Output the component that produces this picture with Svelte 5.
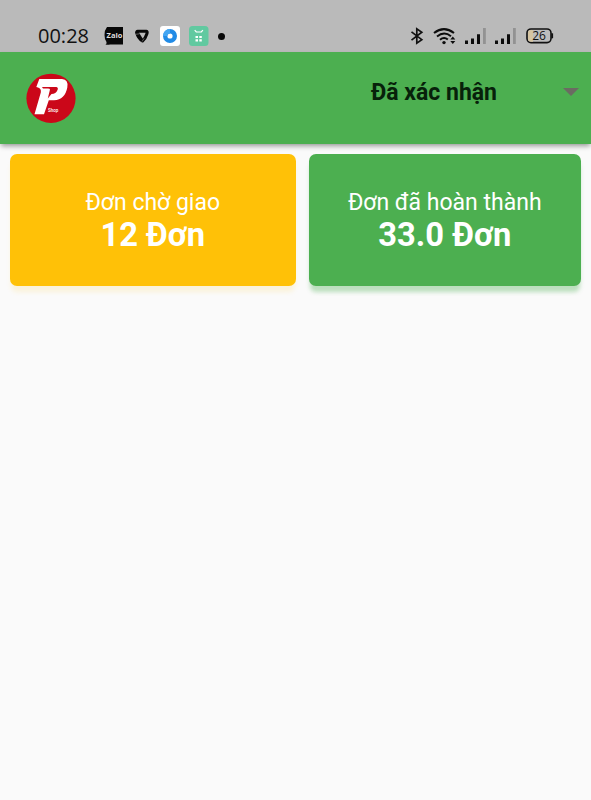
<script>
  const cards = [
    { label: "Đơn chờ giao", value: "12 Đơn", kind: "waiting" },
    { label: "Đơn đã hoàn thành", value: "33.0 Đơn", kind: "done" },
  ];
  let status = "Đã xác nhận";
</script>

<div class="statusBar">
  <span class="clock">00:28</span>
  <div class="notifications">
    <svg width="20" height="20" viewBox="0 0 20 20">
      <path d="M3 1H19V18.500H6Q4 19 1.500 18.500Q3 17.500 2.500 16Q.5 13.500.5 9Q.5 4 3 1Z" fill="#080808" />
      <text x="10.500" y="12" class="zalo">Zalo</text>
    </svg>
    <svg class="shield" width="16" height="20" viewBox="0 0 16 20">
      <path d="M3.800 5.300H12.400Q13.600 5.400 13 7.500Q11.500 12.500 8.500 15Q4 12 2.700 6.800Q2.500 5.400 3.800 5.300Z" fill="none" stroke="#080808" stroke-width="3" stroke-linejoin="round" />
      <path d="M2.500 5.500L7.800 14" stroke="#080808" stroke-width="3" />
      <path d="M1.500 8.300L5.500 7.800M8 15.500L10.200 12.300" stroke="#858585" stroke-width=".7" />
    </svg>
    <svg class="browser" width="20" height="20" viewBox="0 0 20 20">
      <rect width="20" height="20" rx="3" fill="#fff" />
      <circle cx="10" cy="10" r="4.800" fill="#fff" stroke="#218be6" stroke-width="4.400" />
      <path d="M5.200 10A4.800 4.800 0 0 1 10 5.200" fill="none" stroke="#43a6f3" stroke-width="4.400" />
    </svg>
    <svg class="robot" width="20" height="20" viewBox="0 0 20 20">
      <rect width="19.500" height="20" rx="3.500" fill="#61c9a0" />
      <path d="M5.700 4.200L7.300 6H12.300L13.900 4.200" fill="none" stroke="#fff" stroke-width="1.200" />
      <path d="M6.500 10h2.500v2h-2.500zM10.300 10h2.500v2h-2.500zM6.500 13.300h2.500v2.200h-2.500zM10.300 13.300h2.500v2.200h-2.500z" fill="#fff" />
    </svg>
    <i class="dot"></i>
  </div>
  <div class="system">
    <svg width="14" height="18" viewBox="0 0 14 18">
      <path d="M1.500 4.800L11.800 12.700L6.800 16.200V1.800L11.800 5.200L1.500 13.200" fill="none" stroke="#111" stroke-width="1.700" />
    </svg>
    <svg class="wifi" width="24" height="18" viewBox="0 0 24 18">
      <g fill="none" stroke="#0c0c0c" stroke-width="2">
        <path d="M1 6Q11 -1.800 21 6" />
        <path d="M4 9.500Q11 3.800 18 9.200" />
        <path d="M7 12.800Q11 9.500 14.800 12.500" />
      </g>
      <circle cx="11" cy="15.600" r="1.700" fill="#0c0c0c" />
      <path d="M17.300 12.600L19.800 9.500L22.300 12.600ZM17.300 14L19.800 17.100L22.300 14Z" fill="#0c0c0c" />
    </svg>
    {#each [1, 2] as sim (sim)}
      <svg class="signal" width="22" height="18" viewBox="0 0 22 18">
        <path d="M0 13.500h3v3.500h-3zM6 11.500h3v5.500h-3zM12 7.200h3v9.800h-3z" fill="#0c0c0c" />
        <path d="M18 1h2.800v16h-2.800z" fill="#929292" />
      </svg>
    {/each}
    <svg class="battery" width="28" height="18" viewBox="0 0 28 18">
      <rect x="1" y="2" width="24" height="13.600" rx="4" fill="#bdbdbd" stroke="#111" stroke-width="1.600" />
      <path d="M5 3H7V14.700H5Q2 14.700 2 11.700V6Q2 3 5 3Z" fill="#d6c5a2" />
      <path d="M26.200 6.300V11.300" stroke="#111" stroke-width="1.800" />
      <text x="13" y="13.100" class="percent">26</text>
    </svg>
  </div>
</div>

<header class="appBar">
  <svg class="logo" width="50" height="50" viewBox="0 0 50 50">
    <circle cx="25" cy="25.300" r="24.600" fill="#cb0719" />
    <path d="M13.300 6H36Q42.800 6.500 41.300 14.500Q39 26.800 28 27.300H22.800L18 41.200H8.500L14.800 19.500Q15.500 15.500 12 14.500L10.300 14Z" fill="#fff" />
    <path d="M16 14H30.500Q32.500 14.500 31.500 17Q30 21 25.500 21L21.800 25.500L24 16.500Q24 15.500 22 15.500H17Z" fill="#cb0719" />
    <text x="22" y="39.300" class="shop">Shop</text>
  </svg>
  <button class="dropdown">
    <span>{status}</span>
    <svg width="16" height="8" viewBox="0 0 16 8">
      <path d="M0 0H16L8 8Z" fill="#6b6b62" />
    </svg>
  </button>
</header>

<main class="cards">
  {#each cards as card (card.kind)}
    <section class="card {card.kind}">
      <span class="label">{card.label}</span>
      <strong class="value">{card.value}</strong>
    </section>
  {/each}
</main>

<style>
  :global(body) {
    margin: 0;
    background: #fafafa;
    font-family: Roboto, sans-serif;
  }

  svg {
    display: block;
    flex: none;
  }

  .statusBar {
    display: flex;
    align-items: center;
    height: 52px;
    box-sizing: border-box;
    padding: 20px 37px 0 38px;
    background: #bababa;
  }
  .clock {
    width: 66px;
    font: 20px/32px "Open Sans", sans-serif;
    color: #111;
  }
  .notifications,
  .system {
    display: flex;
    align-items: center;
  }
  .system {
    margin-left: auto;
  }
  .zalo {
    font: bold 7.500px "Open Sans", sans-serif;
    fill: #ddd;
    text-anchor: middle;
  }
  .shield {
    margin-left: 10px;
  }
  .browser {
    margin-left: 10px;
  }
  .robot {
    margin-left: 9px;
  }
  .dot {
    width: 7px;
    height: 7px;
    margin-left: 9px;
    border-radius: 50%;
    background: #080808;
  }
  .wifi {
    margin-left: 9px;
  }
  .signal {
    margin-left: 8px;
  }
  .battery {
    margin-left: 9px;
  }
  .percent {
    font: 12px "Open Sans", sans-serif;
    fill: #111;
    text-anchor: middle;
  }

  .appBar {
    display: flex;
    justify-content: space-between;
    align-items: flex-start;
    height: 92px;
    box-sizing: border-box;
    padding: 21px 12px 0 26px;
    background: #4caf50;
    box-shadow: 0 3px 5px -1px rgba(0, 0, 0, 0.4);
  }
  .shop {
    font: 500 4.500px Roboto, sans-serif;
    fill: #fff;
  }
  .dropdown {
    display: flex;
    align-items: center;
    justify-content: space-between;
    width: 208px;
    height: 40px;
    padding: 0;
    border: none;
    background: none;
    font: bold 23px/38px Roboto, sans-serif;
    color: #07210a;
  }
  .dropdown svg {
    margin-bottom: 2px;
  }

  .cards {
    display: grid;
    grid-template-columns: 285.5px 272.5px;
    gap: 13px;
    padding: 10px;
  }
  .card {
    display: flex;
    flex-direction: column;
    align-items: center;
    height: 131.5px;
    box-sizing: border-box;
    padding-top: 35px;
    border-radius: 7px;
    color: #fff;
  }
  .waiting {
    background: #ffc107;
    box-shadow: 0 7px 5px -1px rgba(255, 193, 7, 0.13);
  }
  .done {
    background: #4caf50;
    box-shadow: 0 7px 4px -1px rgba(76, 175, 80, 0.36);
  }
  .label {
    font-size: 23px;
    line-height: 28px;
  }
  .value {
    font-size: 32.7px;
    line-height: 36px;
  }
</style>
